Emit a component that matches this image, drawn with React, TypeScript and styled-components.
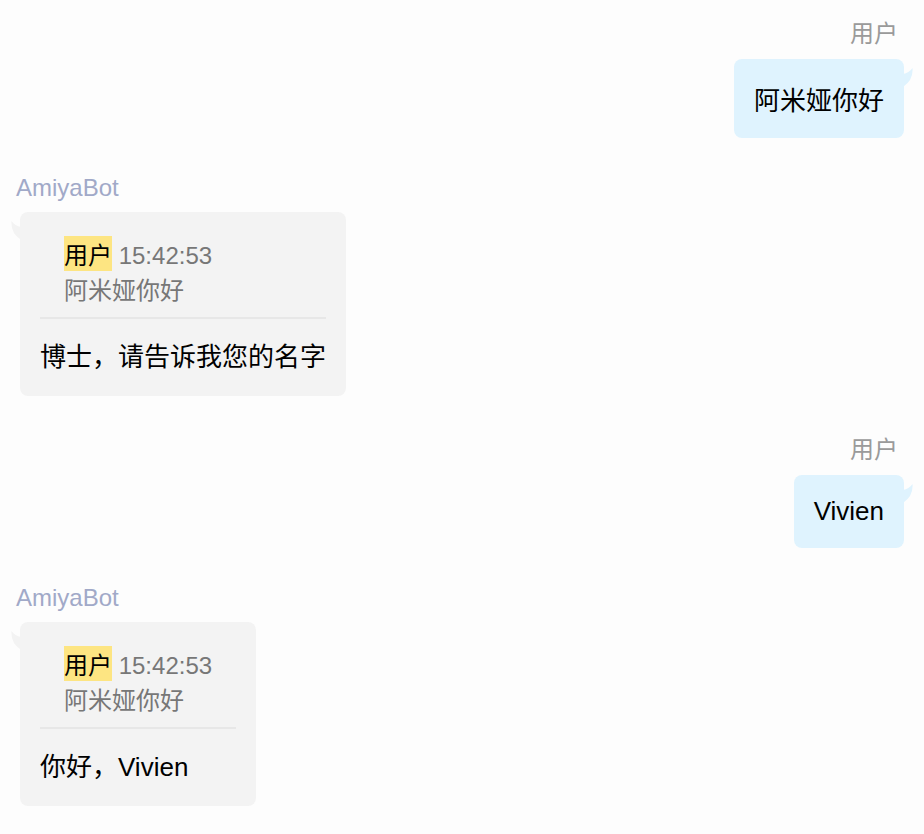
import styled, {createGlobalStyle} from 'styled-components';

type Side = 'left' | 'right';

interface QuoteData {
  user: string;
  time: string;
  text: string;
}

interface MessageData {
  side: Side;
  name: string;
  text: string;
  quote?: QuoteData;
}

const GlobalStyle = createGlobalStyle`
  html, body {
    margin: 0;
    padding: 0;
    background: #fdfdfd;
  }
  body {
    font-family: "Liberation Sans", Arial, "Noto Sans CJK SC", sans-serif;
  }
`;

const Page = styled.div`
  min-height: 100vh;
  box-sizing: border-box;
  padding: 16px 20px 16px 16px;
  background: #fdfdfd;
`;

const MessageList = styled.div`
  display: flex;
  flex-direction: column;
  gap: 36px;
`;

const Message = styled.div<{$side: Side}>`
  display: flex;
  flex-direction: column;
  align-items: ${(p) => (p.$side === 'right' ? 'flex-end' : 'flex-start')};
`;

const SenderName = styled.div<{$side: Side}>`
  font-size: 24px;
  color: ${(p) => (p.$side === 'right' ? '#9a9a9a' : '#a1a9c8')};
  margin: ${(p) => (p.$side === 'right' ? '-2px 6px 10px 0' : '0 0 10px 0')};
`;

const Bubble = styled.div<{$side: Side; $quoted: boolean}>`
  position: relative;
  padding: 21px 20px ${(p) => (p.$quoted ? '23px' : '21px')};
  border-radius: 8px;
  font-size: 26px;
  color: #000;
  background: ${(p) => (p.$side === 'right' ? '#dff3fe' : '#f3f3f3')};
  margin-left: ${(p) => (p.$side === 'left' ? '4px' : '0')};
`;

const TailSvg = styled.svg<{$side: Side}>`
  position: absolute;
  top: 9px;
  width: 10px;
  height: 19px;
  ${(p) => (p.$side === 'right' ? 'right: -9px;' : 'left: -9px; transform: scaleX(-1);')}
`;

const Quote = styled.div`
  padding: 3px 24px 11px;
  border-bottom: 2px solid #e7e7e7;
  margin-bottom: 17px;
  font-size: 24px;
  color: #777;
`;

const QuoteUser = styled.span`
  font-family: "Noto Sans CJK SC", "Liberation Sans", sans-serif;
  background: #fde582;
  color: #000;
`;

const MainText = styled.div`
  display: flex;
  align-items: center;
  min-height: 31px;
`;

const messages: MessageData[] = [
  {side: 'right', name: '用户', text: '阿米娅你好'},
  {
    side: 'left',
    name: 'AmiyaBot',
    text: '博士，请告诉我您的名字',
    quote: {user: '用户', time: '15:42:53', text: '阿米娅你好'},
  },
  {side: 'right', name: '用户', text: 'Vivien'},
  {
    side: 'left',
    name: 'AmiyaBot',
    text: '你好，Vivien',
    quote: {user: '用户', time: '15:42:53', text: '阿米娅你好'},
  },
];

function Tail({side}: {side: Side}) {
  const color = side === 'right' ? '#dff3fe' : '#f3f3f3';
  return (
    <TailSvg $side={side} viewBox="0 0 10 19">
      <path d="M0 6 Q6 5 9.5 0 Q10.5 12 0 19 Z" fill={color} />
    </TailSvg>
  );
}

export default function App() {
  return (
    <>
      <GlobalStyle />
      <Page>
        <MessageList>
          {messages.map((m, i) => (
            <Message key={i} $side={m.side}>
              <SenderName $side={m.side}>{m.name}</SenderName>
              <Bubble $side={m.side} $quoted={!!m.quote}>
                <Tail side={m.side} />
                {m.quote && (
                  <Quote>
                    <div>
                      <QuoteUser>{m.quote.user}</QuoteUser> {m.quote.time}
                    </div>
                    <div>{m.quote.text}</div>
                  </Quote>
                )}
                <MainText>{m.text}</MainText>
              </Bubble>
            </Message>
          ))}
        </MessageList>
      </Page>
    </>
  );
}
